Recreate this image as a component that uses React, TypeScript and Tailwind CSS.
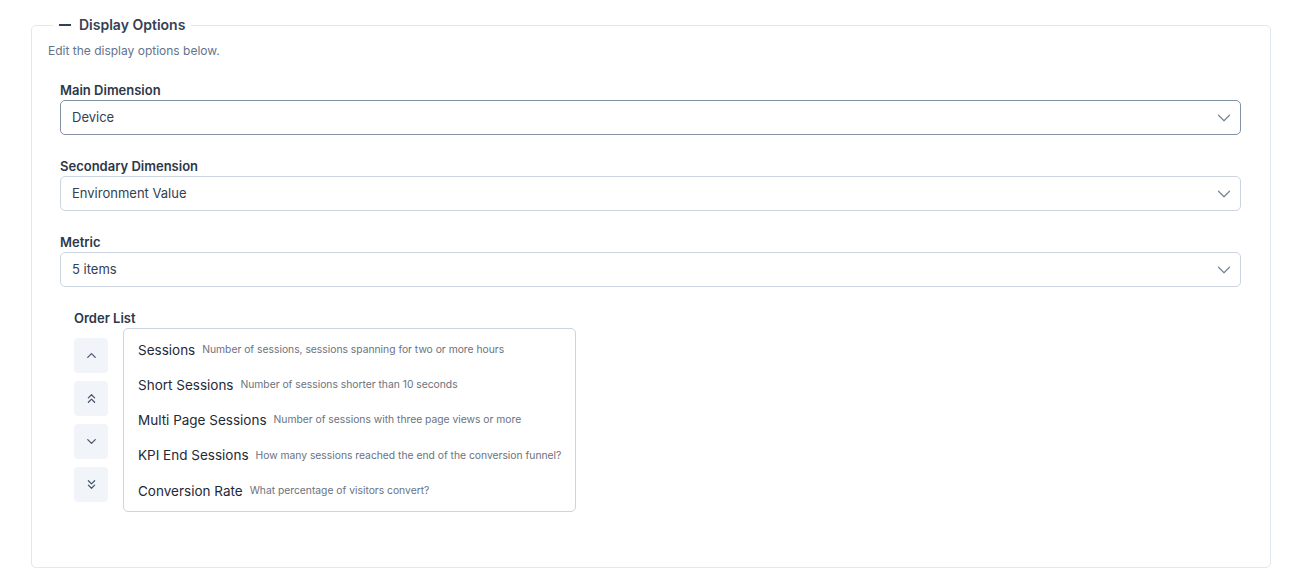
import React from "react";
import { ChevronDown, ChevronUp, ChevronsDown, ChevronsUp } from "lucide-react";

const metrics = [
  { name: "Sessions", desc: "Number of sessions, sessions spanning for two or more hours" },
  { name: "Short Sessions", desc: "Number of sessions shorter than 10 seconds" },
  { name: "Multi Page Sessions", desc: "Number of sessions with three page views or more" },
  { name: "KPI End Sessions", desc: "How many sessions reached the end of the conversion funnel?" },
  { name: "Conversion Rate", desc: "What percentage of visitors convert?" },
];

const SelectField: React.FC<{ label: string; value: string; focused?: boolean }> = ({ label, value, focused }) => (
  <div className="flex flex-col">
    <label className="text-[13px] leading-[18px] font-semibold text-[#2d3748] mb-px">{label}</label>
    <div
      className={`flex items-center justify-between h-[35px] rounded-[5px] border bg-white pl-[11px] pr-[5px] ${
        focused ? "border-[#8391a7]" : "border-[#cbd5e1]"
      }`}
    >
      <span className="text-[13px] text-[#334155]">{value}</span>
      <ChevronDown size={22} strokeWidth={1.4} className="text-[#7a8799]" />
    </div>
  </div>
);

const App: React.FC = () => {
  return (
    <div className="min-h-screen bg-white pt-[15px] pl-[31px] pr-[28px]" style={{ fontFamily: "Inter, 'Noto Sans', sans-serif" }}>
      <fieldset className="border border-[#e2e8f0] rounded-[5px] px-4 pb-[55px]">
        <legend className="ml-[5px] px-[6px] text-[14px] leading-[20px] font-semibold text-[#334155]">
          <span className="inline-block w-[12px] h-[1.5px] bg-[#334155] align-middle mr-[8px] mb-[2px]"></span>
          Display Options
        </legend>
        <p className="mt-[8px] text-[12px] leading-[16px] text-[#64748b]">Edit the display options below.</p>

        <div className="mt-[22px] pl-[12px] pr-[13px] flex flex-col gap-[22px]">
          <SelectField label="Main Dimension" value="Device" focused />
          <SelectField label="Secondary Dimension" value="Environment Value" />
          <SelectField label="Metric" value="5 items" />

          <div className="pl-[14px]">
            <div className="text-[13px] leading-[18px] font-semibold text-[#2d3748]">Order List</div>
            <div className="flex gap-[15px] mt-px">
              <div className="flex flex-col gap-2 mt-[10px]">
                {[ChevronUp, ChevronsUp, ChevronDown, ChevronsDown].map((Icon, i) => (
                  <button key={i} className="w-[34px] h-[35px] rounded-[4px] bg-[#f1f5f9] flex items-center justify-center text-[#475569]">
                    <Icon size={15} strokeWidth={2} />
                  </button>
                ))}
              </div>
              <div className="w-[453px] border border-[#cbd5e1] rounded-[5px] py-[3px] px-[14px]">
                {metrics.map((m) => (
                  <div key={m.name} className="h-[35.25px] flex items-center gap-[7px] whitespace-nowrap">
                    <span className="text-[13.5px] text-[#1f2937]">{m.name}</span>
                    <span className="text-[10.3px] text-[#6b7280]">{m.desc}</span>
                  </div>
                ))}
              </div>
            </div>
          </div>
        </div>
      </fieldset>
    </div>
  );
};

export default App;
